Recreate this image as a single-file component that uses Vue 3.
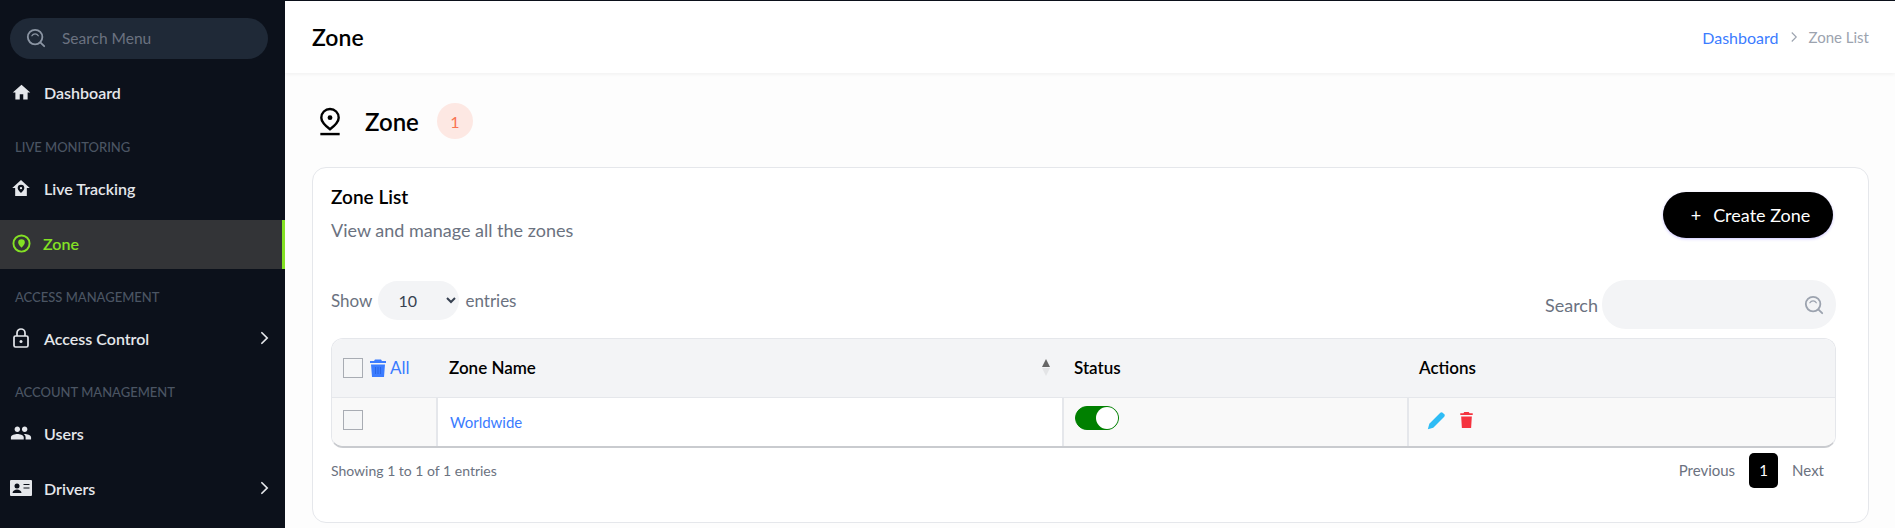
<script setup>
const sections = [
  { items: [{ name: 'Dashboard', icon: 'home' }] },
  { label: 'LIVE MONITORING', items: [{ name: 'Live Tracking', icon: 'track' }, { name: 'Zone', icon: 'pin', active: true }] },
  { label: 'ACCESS MANAGEMENT', items: [{ name: 'Access Control', icon: 'lock', more: true }] },
  { label: 'ACCOUNT MANAGEMENT', items: [{ name: 'Users', icon: 'users' }, { name: 'Drivers', icon: 'card', more: true }] }
]
</script>

<template>
  <div class="layout">
    <aside class="sidebar">
      <div class="menu-search">
        <svg class="search-icon" viewBox="0 0 22 22" width="20" height="20" fill="none" stroke="#8b95a3" stroke-width="2" stroke-linecap="round">
          <circle cx="10" cy="10" r="8" />
          <path d="M6.5 8.5a4 4 0 0 1 7 0" stroke-width="1.4" />
          <path d="M16 16l4 4" />
        </svg>
        <span>Search Menu</span>
      </div>
      <div v-for="(section, i) in sections" :key="i" class="section">
        <div v-if="section.label" class="section-label">{{ section.label }}</div>
        <div v-for="item in section.items" :key="item.name" class="nav-item" :class="[{ active: item.active }, item.name === 'Drivers' ? 'tall' : '']">
          <span class="nav-icon">
            <svg v-if="item.icon === 'home'" viewBox="0 0 24 24" width="21" height="21" fill="currentColor"><path d="M10 20v-6h4v6h5v-8h3L12 3 2 12h3v8z" /></svg>
            <svg v-else-if="item.icon === 'track'" viewBox="0 0 24 24" width="20" height="20" fill="currentColor"><path fill-rule="evenodd" d="M12 2.5 1.500 12H5v9.500h14V12h3.500zM12 8a4 4 0 0 1 4 4c0 2.600-4 6-4 6s-4-3.400-4-6a4 4 0 0 1 4-4zm0 2.700a1.400 1.400 0 1 0 0 2.800 1.400 1.400 0 0 0 0-2.800z" /></svg>
            <svg v-else-if="item.icon === 'pin'" viewBox="0 0 20 20" width="19" height="19" fill="none" stroke="currentColor" stroke-width="2"><circle cx="10" cy="10" r="8.500" /><path fill="currentColor" stroke="none" d="M10 5.500a3.500 3.500 0 0 1 3.500 3.500c0 2.200-3.500 5.500-3.500 5.500S6.500 11.200 6.500 9A3.500 3.500 0 0 1 10 5.500z" /></svg>
            <svg v-else-if="item.icon === 'lock'" viewBox="0 0 20 20" width="20" height="20" fill="none" stroke="currentColor" stroke-width="1.700"><rect x="3" y="8" width="14" height="11" rx="1.500" /><path d="M6 8V5a4 4 0 0 1 8 0v3" /><circle cx="10" cy="13.500" r="1.500" fill="currentColor" stroke="none" /></svg>
            <svg v-else-if="item.icon === 'users'" viewBox="0 0 24 24" width="22" height="22" fill="currentColor"><path d="M16 11c1.660 0 2.990-1.340 2.990-3S17.660 5 16 5c-1.660 0-3 1.340-3 3s1.340 3 3 3zm-8 0c1.660 0 2.990-1.340 2.990-3S9.660 5 8 5C6.340 5 5 6.340 5 8s1.340 3 3 3zm0 2c-2.330 0-7 1.170-7 3.500V19h14v-2.500c0-2.330-4.670-3.500-7-3.500zm8 0c-.29 0-.62.02-.97.05 1.160.84 1.970 1.970 1.970 3.450V19h6v-2.500c0-2.330-4.670-3.500-7-3.500z" /></svg>
            <svg v-else viewBox="0 0 22 16" width="22" height="16"><rect width="22" height="16" rx="1" fill="currentColor" /><circle cx="7" cy="6" r="2.500" fill="#0c111b" /><path d="M2.500 13c0-2.300 2.500-3.500 4.500-3.500s4.500 1.200 4.500 3.500z" fill="#0c111b" /><path d="M13.500 4.500h6M13.500 8h6" stroke="#0c111b" stroke-width="1.200" /></svg>
          </span>
          <span class="nav-name">{{ item.name }}</span>
          <svg v-if="item.more" class="chevron" viewBox="0 0 10 16" width="9" height="14" fill="none" stroke="currentColor" stroke-width="2" stroke-linecap="round"><path d="M2 2l6 6-6 6" /></svg>
        </div>
      </div>
    </aside>

    <div class="main">
      <header class="topbar">
        <h1>Zone</h1>
        <div class="crumbs">
          <a>Dashboard</a>
          <svg viewBox="0 0 10 16" width="8" height="12" fill="none" stroke="#9ca3af" stroke-width="1.500"><path d="M2 2l6 6-6 6" /></svg>
          <span>Zone List</span>
        </div>
      </header>

      <div class="content">
        <div class="page-title">
          <svg viewBox="0 0 22 30" width="22" height="29" fill="none" stroke="#000" stroke-width="2.500">
            <path d="M11 2a9 9 0 0 1 9 9c0 5-9 12-9 12S2 16 2 11a9 9 0 0 1 9-9z" />
            <circle cx="11" cy="11" r="2.500" fill="#000" stroke="none" />
            <path d="M1 28h20" stroke-width="2.500" />
          </svg>
          <h2>Zone</h2>
          <span class="count">1</span>
        </div>

        <section class="card">
          <div class="card-head">
            <div>
              <h3>Zone List</h3>
              <p>View and manage all the zones</p>
            </div>
            <button class="create-btn"><span class="plus">+</span>Create Zone</button>
          </div>

          <div class="controls">
            <label class="show">Show
              <select>
                <option>10</option>
                <option>25</option>
                <option>50</option>
              </select>
              entries
            </label>
            <div class="search">
              <span>Search</span>
              <div class="search-box">
                <svg viewBox="0 0 22 22" width="20" height="20" fill="none" stroke="#9ca3af" stroke-width="2" stroke-linecap="round">
                  <circle cx="10" cy="10" r="8" />
                  <path d="M6.500 8.500a4 4 0 0 1 7 0" stroke-width="1.400" />
                  <path d="M16 16l4 4" />
                </svg>
              </div>
            </div>
          </div>

          <div class="table-wrap">
            <table>
              <thead>
                <tr>
                  <th class="col-check">
                    <div class="check-all">
                      <span class="box"></span>
                      <svg viewBox="0 0 16 20" width="16" height="20" fill="#3b7cff"><path d="M5 1.500h6L12 3h4v2H0V3h4zM1 6.500h14l-1 12.500H2z" /><path d="M5.500 9v7M8 9v7M10.500 9v7" stroke="#2a66e6" stroke-width="1" /></svg>
                      <span class="all">All</span>
                    </div>
                  </th>
                  <th class="col-name">
                    <div class="name-head">
                      Zone Name
                      <span class="sort"><i class="up"></i><i class="down"></i></span>
                    </div>
                  </th>
                  <th class="col-status">Status</th>
                  <th>Actions</th>
                </tr>
              </thead>
              <tbody>
                <tr>
                  <td class="shade"><span class="box row-box"></span></td>
                  <td class="link">Worldwide</td>
                  <td class="shade"><span class="toggle"><i></i></span></td>
                  <td class="shade">
                    <div class="actions">
                      <svg viewBox="0 0 24 24" width="20" height="20" fill="#2ebcf5"><path d="M1 23l1.800-6.500L16 3.300a2 2 0 0 1 2.800 0l1.900 1.900a2 2 0 0 1 0 2.800L7.500 21.200z" /></svg>
                      <svg viewBox="0 0 14 18" width="13" height="16" fill="#f5333f"><path d="M4.500 0h5l1 1.500H14v2H0v-2h3.500zM1 5h12l-.8 13H1.800z" /></svg>
                    </div>
                  </td>
                </tr>
              </tbody>
            </table>
          </div>

          <div class="table-foot">
            <span class="info">Showing 1 to 1 of 1 entries</span>
            <div class="pager">
              <span>Previous</span>
              <b>1</b>
              <span>Next</span>
            </div>
          </div>
        </section>
      </div>
    </div>
  </div>
</template>

<style>
html, body { margin: 0; background: #fff; }
</style>

<style scoped>
.layout {
  display: flex;
  height: 528px;
  overflow: hidden;
  font-family: Lato, "Noto Sans", sans-serif;
}

.sidebar {
  width: 285px;
  flex: none;
  background: #0c111b;
  padding-top: 18px;
  box-sizing: border-box;
}

.menu-search {
  display: flex;
  align-items: center;
  gap: 16px;
  width: 258px;
  height: 41px;
  margin-left: 10px;
  padding: 0 0 1px 16px;
  box-sizing: border-box;
  background: #1f2937;
  border-radius: 21px;
  color: #6b7280;
  font-size: 15.5px;
}

.section-label {
  height: 20px;
  margin-left: 15px;
  color: #4b5563;
  font-size: 13px;
  line-height: 20px;
  font-weight: 500;
}

.section:nth-of-type(2) { margin-top: 9px; }
.section:nth-of-type(3) { margin-top: 19px; }
.section:nth-of-type(4) { margin-top: 18px; }
.section:nth-of-type(5) { margin-top: 18px; }

.nav-item {
  display: flex;
  align-items: center;
  height: 50px;
  padding: 0 0 2px 10px;
  color: #e5e7eb;
  font-size: 16px;
  font-weight: 600;
  box-sizing: border-box;
}

.section-label + .nav-item { margin-top: 7px; }
.nav-item + .nav-item { margin-top: 6px; }
.nav-item.tall { margin-top: 5px; }

.nav-item.active {
  height: 49px;
  background: #333437;
  color: #84e124;
  border-right: 3px solid #84e124;
}

.nav-icon {
  width: 22px;
  margin-right: 12px;
  display: flex;
  justify-content: center;
  flex: none;
}

.nav-item.active .nav-icon { margin-right: 11px; }

.chevron { margin-left: auto; margin-right: 16px; color: #e5e7eb; }

.main {
  flex: 1;
  min-width: 0;
  background: #fdfdfd;
  border-top: 1px solid #0c111b;
}

.topbar {
  display: flex;
  align-items: center;
  justify-content: space-between;
  height: 72px;
  padding: 0 26px 0 27px;
  background: #fff;
  box-shadow: 0 1px 4px rgba(0, 0, 0, 0.06);
}

.topbar h1 {
  margin: 0;
  font-size: 23px;
  font-weight: 600;
  color: #000;
}

.crumbs {
  display: flex;
  align-items: center;
  gap: 11px;
  font-size: 15px;
  color: #9ca3af;
}

.crumbs a { color: #3b7cff; font-size: 16px; }

.content { padding: 0 26px 0 27px; }

.page-title {
  display: flex;
  align-items: center;
  height: 92px;
  padding: 2px 0 0 7px;
}

.page-title h2 {
  margin: 0 18px 0 24px;
  font-size: 24px;
  font-weight: 600;
  color: #000;
}

.count {
  width: 36px;
  height: 36px;
  border-radius: 50%;
  background: #fde8e3;
  color: #f97352;
  display: flex;
  align-items: center;
  justify-content: center;
  font-size: 16px;
}

.card {
  height: 356px;
  box-sizing: border-box;
  background: #fff;
  border: 1px solid #e5e7eb;
  border-radius: 14px;
  padding: 0 32px 0 18px;
}

.card-head {
  display: flex;
  justify-content: space-between;
  height: 112px;
  padding-top: 17px;
  box-sizing: border-box;
}

.card-head h3 {
  margin: 0 0 11px;
  font-size: 19px;
  font-weight: 600;
  color: #000;
}

.card-head p {
  margin: 0;
  font-size: 18px;
  color: #6b7280;
}

.create-btn {
  width: 170px;
  height: 46px;
  margin: 7px 3px 0 0;
  padding: 0 0 0 5px;
  border: none;
  border-radius: 23px;
  background: #000;
  color: #fff;
  font: inherit;
  font-size: 18px;
  box-shadow: 0 1px 3px rgba(80, 60, 255, 0.3);
}

.plus { margin-right: 12px; }

.controls {
  display: flex;
  align-items: center;
  justify-content: space-between;
  height: 49px;
}

.show {
  display: flex;
  align-items: center;
  gap: 6px;
  margin-top: -8px;
  color: #6b7280;
  font-size: 17px;
}

.show select {
  width: 81px;
  height: 39px;
  padding-left: 16px;
  border: none;
  border-radius: 20px;
  background: #f3f4f6;
  color: #374151;
  font: inherit;
  font-size: 16px;
}

.search {
  display: flex;
  align-items: center;
  gap: 4px;
  color: #6b7280;
  font-size: 18px;
}

.search-box {
  width: 234px;
  height: 49px;
  box-sizing: border-box;
  border-radius: 24px;
  background: #f3f4f6;
  display: flex;
  align-items: center;
  justify-content: flex-end;
  padding-right: 12px;
}

.table-wrap {
  margin-top: 9px;
  border: 1px solid #e5e7eb;
  border-bottom: 2px solid #c9cbcf;
  border-radius: 12px;
  overflow: hidden;
}

table {
  width: 100%;
  border-collapse: collapse;
  table-layout: fixed;
  font-size: 17px;
}

thead tr {
  height: 58px;
  background: #f3f4f6;
  border-bottom: 1px solid #e5e7eb;
}

th {
  text-align: left;
  font-weight: 600;
  color: #000;
  padding: 0 0 0 11px;
}

th.col-name { padding-left: 12px; }

td {
  height: 48px;
  padding: 0 0 0 11px;
  border-left: 2px solid #e5e7eb;
}

td:first-child { border-left: none; }

.col-check { width: 94px; }
.col-name { width: 614px; }
.col-status { width: 334px; }

.check-all { display: flex; align-items: center; gap: 4px; }

.check-all .box { margin-right: 3px; }

.check-all .all { color: #3b7cff; font-weight: 400; }

.box {
  display: block;
  width: 18px;
  height: 18px;
  border: 1px solid #a8acb3;
  background: #f5f6f7;
  flex: none;
}

.row-box { margin-top: -4px; }

.name-head {
  display: flex;
  align-items: center;
  justify-content: space-between;
  padding-right: 13px;
}

.sort { display: flex; flex-direction: column; gap: 1px; }

.sort i { display: block; border-left: 4.500px solid transparent; border-right: 4.500px solid transparent; }

.sort .up { border-bottom: 8px solid #666; }

.sort .down { border-top: 8px solid #e3e4e6; }

.shade { background: #f9f9f9; }

.link { color: #3b7cff; font-size: 15px; background: #fff; padding-left: 12px; }

.toggle {
  display: block;
  width: 42px;
  height: 22px;
  border-radius: 12px;
  background: #008000;
  border: 1px solid #008000;
  position: relative;
  margin-top: -8px;
}

.toggle i {
  position: absolute;
  right: 0;
  top: 0;
  width: 22px;
  height: 22px;
  border-radius: 50%;
  background: #fff;
}

.actions { display: flex; align-items: center; gap: 13px; margin: -4px 0 0 7px; }

.table-foot {
  display: flex;
  align-items: flex-start;
  justify-content: space-between;
  margin-top: 5px;
  color: #6b7280;
  font-size: 15px;
}

.info { margin-top: 9px; font-size: 14px; }

.pager {
  display: flex;
  align-items: center;
  gap: 14px;
  margin-right: 12px;
}

.pager b {
  width: 29px;
  height: 35px;
  border-radius: 5px;
  background: #000;
  color: #fff;
  font-weight: 400;
  display: flex;
  align-items: center;
  justify-content: center;
}
</style>
